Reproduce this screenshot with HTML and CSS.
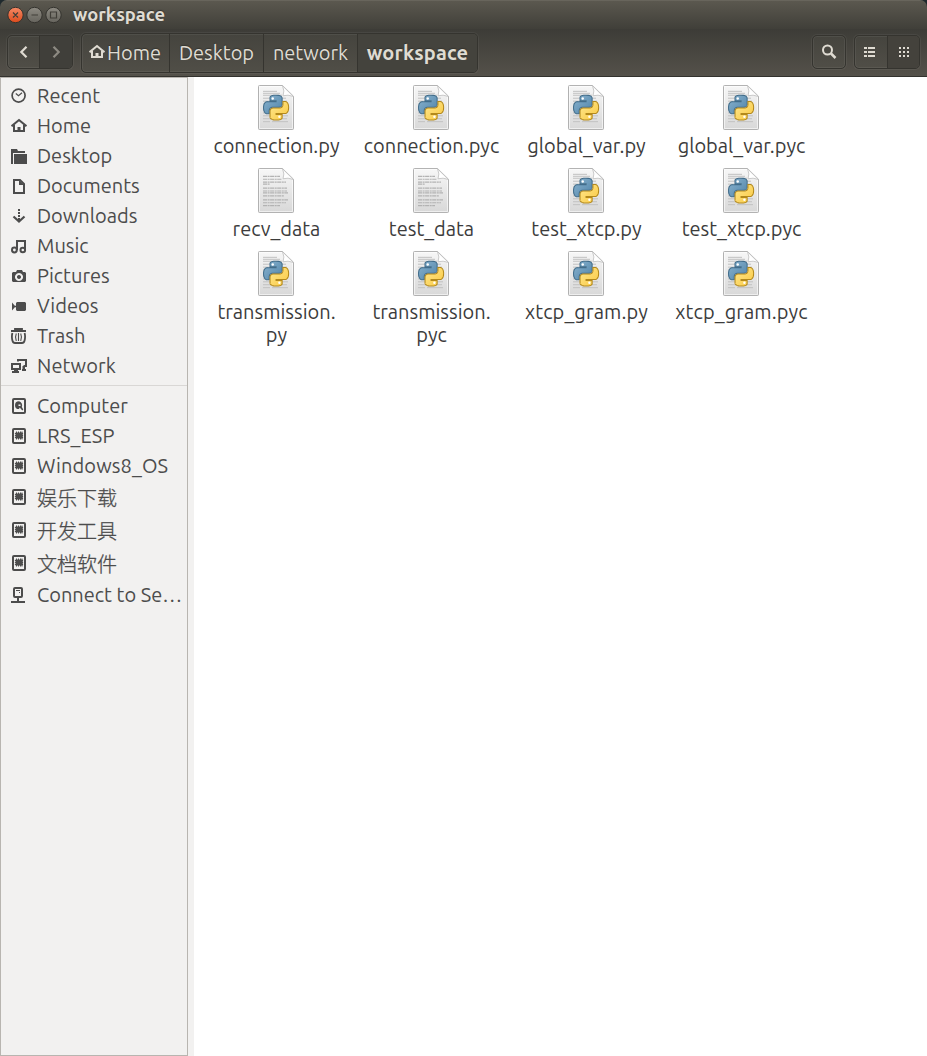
FILE: index.html
```html
<!DOCTYPE html>
<html lang="en">
<head>
<meta charset="utf-8">
<title>workspace</title>
<link rel="stylesheet" href="styles.css">
</head>
<body>
<svg class="defs" width="0" height="0" aria-hidden="true">
  <defs>
    <linearGradient id="paper" x1="0" y1="0" x2="0" y2="1"><stop offset="0" stop-color="#f7f7f7"/><stop offset="1" stop-color="#d8d8d8"/></linearGradient>
    <linearGradient id="blue" x1="0" y1="0" x2="1" y2="1"><stop offset="0" stop-color="#8bb4d0"/><stop offset="1" stop-color="#4f83a8"/></linearGradient>
    <linearGradient id="gold" x1="1" y1="1" x2="0" y2="0"><stop offset="0" stop-color="#ffe890"/><stop offset="1" stop-color="#f9c840"/></linearGradient>
  </defs>
  <symbol id="i-recent" viewBox="0 0 16 16"><circle cx="7.6" cy="7.6" r="6.5" fill="none" stroke="currentColor" stroke-width="1.7"/><path d="M4.8 5.5 7.5 7.7 11 4.8" fill="none" stroke="currentColor" stroke-width="1.2"/></symbol>
  <symbol id="i-home" viewBox="0 0 16 16"><path d="M.5 8.200 8 2l7.500 6.200" fill="none" stroke="currentColor" stroke-width="2"/><path d="M3 7v6h10V7" fill="none" stroke="currentColor" stroke-width="2"/><path d="M6.500 9h3v5h-3z" fill="currentColor"/></symbol>
  <symbol id="i-desktop" viewBox="0 0 16 16"><path d="M0 1h6l1 2h7v2H2v11H0z" fill="currentColor"/><path d="M3 6h13v10H3z" fill="currentColor"/></symbol>
  <symbol id="i-doc" viewBox="0 0 16 16"><path d="M3 2h6l4 4v9H3z" fill="none" stroke="currentColor" stroke-width="2"/><path d="M8 2v5h5z" fill="currentColor"/></symbol>
  <symbol id="i-down" viewBox="0 0 16 16"><path d="M7 1h2v2H7zM7 4h2v2H7zM7 7h2v2H7zM7 10h2v3H7z" fill="currentColor"/><path d="m2.500 8.500 5.500 5 5.500-5" fill="none" stroke="currentColor" stroke-width="2.200"/></symbol>
  <symbol id="i-music" viewBox="0 0 16 16"><path d="M6 12V3h8v9" fill="none" stroke="currentColor" stroke-width="2"/><circle cx="3.400" cy="12" r="2.400" fill="none" stroke="currentColor" stroke-width="2"/><circle cx="11.800" cy="12" r="2.300" fill="none" stroke="currentColor" stroke-width="2"/></symbol>
  <symbol id="i-pic" viewBox="0 0 16 16"><path fill-rule="evenodd" d="M2 4h3l1-2h5l1 2h2l1 1v8l-1 1H2l-1-1V5zM8 5a4 4 0 1 0 .01 0zm0 2a2 2 0 1 1-.01 0z" fill="currentColor"/></symbol>
  <symbol id="i-video" viewBox="0 0 16 16"><path d="m1 4.500 3.500 4-3.500 4zM6 4h8l1 1v7l-1 1H6l-1-1V9.200H4V7.800h1V5z" fill="currentColor"/></symbol>
  <symbol id="i-trash" viewBox="0 0 16 16"><path d="M0 3h15M4 3V1h7v2" fill="none" stroke="currentColor" stroke-width="1.800"/><path d="M1.400 5q-1 3.500 0 7.500 .6 2.500 2.600 2.500h7q2 0 2.600-2.500 1-4 0-7.500" fill="none" stroke="currentColor" stroke-width="1.800"/><path d="M5.300 5.500q-1.600 3.800 0 7.500M7.500 5v8M9.700 5.500q1.600 3.800 0 7.500" fill="none" stroke="currentColor" stroke-width="1.100"/></symbol>
  <symbol id="i-net" viewBox="0 0 16 16"><path d="M7 3.500V2h8v6h-2.500M1 6h8v5H1zM1 14h7M11 12h4" fill="none" stroke="currentColor" stroke-width="2"/><path d="M3 11h4v3H3zM11.500 8H14v4h-2.500z" fill="currentColor"/></symbol>
  <symbol id="i-disk" viewBox="0 0 16 16"><rect x="2" y="1" width="12" height="14" rx="1" fill="none" stroke="currentColor" stroke-width="2"/><path d="M8 3.300a4 3.900 0 1 0 0 7.800l.7-1.600 2.600 3 1-1-1.500-2.600A4 4 0 0 0 8 3.300z" fill="currentColor"/><path d="M7.500 6.500h2v1.500h-2z" fill="#f2f1f0"/></symbol>
  <symbol id="i-chip" viewBox="0 0 16 16"><rect x="2" y="1" width="12" height="14" rx="1" fill="none" stroke="currentColor" stroke-width="2"/><path d="M4.500 4.500h7v6h-7z" fill="currentColor"/><path d="M5.500 3.500v8M7.500 3.500v8M9.500 3.500v8M11 3.500v8" stroke="currentColor" stroke-width="1"/><path d="M3.900 5.500h8.200M3.900 7.500h8.200M3.900 9.500h8.200" stroke="currentColor" stroke-width="1"/></symbol>
  <symbol id="i-server" viewBox="0 0 16 16"><rect x="3" y="1" width="8" height="9" rx="1" fill="none" stroke="currentColor" stroke-width="2"/><path d="M5 3h4v1H5zM8 5h1v1H8zM6 11h2v3H6zM0 14h14v2H0z" fill="currentColor"/></symbol>
  <symbol id="python-half" viewBox="0 0 24 24" overflow="visible"><path stroke-width="1" d="M14.250.18l.9.2.73.26.59.3.45.32.34.34.25.34.16.33.1.3.04.26.02.2-.01.13V8.500l-.05.63-.13.55-.21.46-.26.38-.3.31-.33.25-.35.19-.35.14-.33.1-.3.07-.26.04-.21.02H8.770l-.69.05-.59.14-.5.22-.41.27-.33.32-.27.35-.2.36-.15.37-.1.35-.07.32-.04.27-.02.21v3.060H3.170l-.21-.03-.28-.07-.32-.12-.35-.18-.36-.26-.36-.36-.35-.46-.32-.59-.28-.73-.21-.88-.14-1.050-.05-1.230.06-1.220.16-1.040.24-.87.32-.71.36-.57.4-.44.42-.33.42-.24.4-.16.36-.1.32-.05.24-.01h.16l.06.01h8.160v-.83H6.180l-.01-2.750-.02-.37.05-.34.11-.31.17-.28.25-.26.31-.23.38-.2.44-.18.51-.15.58-.12.64-.1.71-.06.77-.04.84-.02z"/></symbol>
  <symbol id="f-text" viewBox="0 0 36 46" preserveAspectRatio="none"><path d="M.5 1.500q0-1 1-1h23l11 11v33q0 1-1 1h-33q-1 0-1-1z" fill="url(#paper)" stroke="#b0b0b0"/><path d="M1.500 1.500h23l10 10v33h-33z" fill="none" stroke="#fff" stroke-opacity=".6"/><path d="M5 8.500h17M5 11.500h19M5 14.500h23M5 16.500h7M5 20.500h24M5 23.500h24M5 25.500h25M5 28.500h21M5 32.500h25M5 35.500h23M5 38.500h17" stroke="#b2b2b2" stroke-width="1.200" stroke-dasharray="4 .6 2 .5"/><path d="M24.500.8q2.500 5.500.5 10.200 5-1.500 10.300.7z" fill="#fff" stroke="#bdbdbd" stroke-width=".8"/></symbol>
  <symbol id="f-py" viewBox="0 0 36 46" preserveAspectRatio="none"><path d="M.5 1.500q0-1 1-1h23l11 11v33q0 1-1 1h-33q-1 0-1-1z" fill="url(#paper)" stroke="#b0b0b0"/><path d="M1.500 1.500h23l10 10v33h-33z" fill="none" stroke="#fff" stroke-opacity=".6"/><path d="M5 6.500h14M5 8.500h17M5 10.500h19M5 13.500h23M5 16.500h24M5 19.500h24M5 22.500h24M5 25.500h25M5 28.500h24M5 31.500h25M5 34.500h24M5 37.500h7M14 37.500h16" stroke="#c0c0c0" stroke-width="1"/><path d="M24.500.8q2.500 5.500.5 10.200 5-1.500 10.300.7z" fill="#fff" stroke="#bdbdbd" stroke-width=".8"/><g transform="translate(5.600 10.400) scale(1.040 1.060)"><use href="#python-half" width="24" height="24" fill="url(#blue)" stroke="#426d8b"/><g transform="rotate(180 12 12)"><use href="#python-half" width="24" height="24" fill="url(#gold)" stroke="#b3891c"/></g><circle cx="8.800" cy="3.200" r="1.150" fill="#fff"/><circle cx="15.200" cy="20.800" r="1.150" fill="#fff"/></g></symbol>
</svg>

<header class="chrome">
  <div class="titlebar">
    <svg class="winbuttons" width="56" height="18" viewBox="0 0 56 18">
      <defs><linearGradient id="close" x1="0" y1="0" x2="0" y2="1"><stop offset="0" stop-color="#f58a66"/><stop offset="1" stop-color="#dd4b1c"/></linearGradient><linearGradient id="gray" x1="0" y1="0" x2="0" y2="1"><stop offset="0" stop-color="#8d8a82"/><stop offset="1" stop-color="#66645d"/></linearGradient></defs>
      <circle cx="8.500" cy="9" r="7.700" fill="url(#close)" stroke="#34332e"/><circle cx="27.500" cy="9" r="7.700" fill="url(#gray)" stroke="#34332e"/><circle cx="46.500" cy="9" r="7.700" fill="url(#gray)" stroke="#34332e"/>
      <path d="m6 6.500 5 5m0-5-5 5M24.500 9h6.500M43.500 6h6v6h-6z" fill="none" stroke="#403e38" stroke-width="1.200"/>
    </svg>
    <span class="title">workspace</span>
  </div>
  <nav class="toolbar">
    <div class="group nav">
      <span class="btn"><svg width="12" height="14" viewBox="0 0 12 14"><path d="M8.500 1.700 3.300 7l5.200 5.300" fill="none" stroke="#dfdbd2" stroke-width="2.200"/></svg></span>
      <span class="btn off"><svg width="12" height="14" viewBox="0 0 12 14"><path d="M3.500 1.700 8.700 7l-5.200 5.300" fill="none" stroke="#8d8a82" stroke-width="2.200"/></svg></span>
    </div>
    <div class="group path">
      <span class="crumb c-home"><svg width="16" height="16"><use href="#i-home"/></svg><span>Home</span></span>
      <span class="crumb c-desktop">Desktop</span>
      <span class="crumb c-network">network</span>
      <span class="crumb c-current">workspace</span>
    </div>
    <div class="group search"><span class="btn"><svg width="16" height="16" viewBox="0 0 16 16"><circle cx="6.500" cy="6" r="4.500" fill="none" stroke="#dfdbd2" stroke-width="2"/><path d="m10 9.500 4.500 4.500" stroke="#dfdbd2" stroke-width="2.500"/></svg></span></div>
    <div class="group views">
      <span class="btn b-list"><svg width="11" height="10" viewBox="0 0 11 10"><path d="M0 0h3v2H0zM4 0h7v2H4zM0 4h3v2H0zM4 4h7v2H4zM0 8h3v2H0zM4 8h7v2H4z" fill="#dfdbd2"/></svg></span>
      <span class="btn on"><svg width="10" height="10" viewBox="0 0 10 10"><path d="M0 0h2v2H0zM4 0h2v2H4zM8 0h2v2H8zM0 4h2v2H0zM4 4h2v2H4zM8 4h2v2H8zM0 8h2v2H0zM4 8h2v2H4zM8 8h2v2H8z" fill="#dfdbd2"/></svg></span>
    </div>
  </nav>
</header>

<main class="body">
  <aside class="sidebar">
    <ul class="places">
      <li><svg class="ico"><use href="#i-recent"/></svg><span>Recent</span></li>
      <li><svg class="ico"><use href="#i-home"/></svg><span>Home</span></li>
      <li><svg class="ico"><use href="#i-desktop"/></svg><span>Desktop</span></li>
      <li><svg class="ico"><use href="#i-doc"/></svg><span>Documents</span></li>
      <li><svg class="ico"><use href="#i-down"/></svg><span>Downloads</span></li>
      <li><svg class="ico"><use href="#i-music"/></svg><span>Music</span></li>
      <li><svg class="ico"><use href="#i-pic"/></svg><span>Pictures</span></li>
      <li><svg class="ico"><use href="#i-video"/></svg><span>Videos</span></li>
      <li><svg class="ico"><use href="#i-trash"/></svg><span>Trash</span></li>
      <li><svg class="ico"><use href="#i-net"/></svg><span class="wide">Network</span></li>
    </ul>
    <ul class="places devices">
      <li><svg class="ico"><use href="#i-disk"/></svg><span>Computer</span></li>
      <li><svg class="ico"><use href="#i-chip"/></svg><span class="wide">LRS_ESP</span></li>
      <li><svg class="ico"><use href="#i-chip"/></svg><span class="wide">Windows8_OS</span></li>
      <li class="cjk"><svg class="ico"><use href="#i-chip"/></svg><span>娱乐下载</span></li>
      <li class="cjk"><svg class="ico"><use href="#i-chip"/></svg><span>开发工具</span></li>
      <li class="cjk"><svg class="ico"><use href="#i-chip"/></svg><span>文档软件</span></li>
      <li><svg class="ico"><use href="#i-server"/></svg><span>Connect to Se…</span></li>
    </ul>
  </aside>
  <section class="files">
    <div class="file"><svg><use href="#f-py"/></svg><span>connection.py</span></div>
    <div class="file"><svg><use href="#f-py"/></svg><span>connection.pyc</span></div>
    <div class="file"><svg><use href="#f-py"/></svg><span>global_var.py</span></div>
    <div class="file"><svg><use href="#f-py"/></svg><span>global_var.pyc</span></div>
    <div class="file"><svg><use href="#f-text"/></svg><span>recv_data</span></div>
    <div class="file"><svg><use href="#f-text"/></svg><span>test_data</span></div>
    <div class="file"><svg><use href="#f-py"/></svg><span>test_xtcp.py</span></div>
    <div class="file"><svg><use href="#f-py"/></svg><span>test_xtcp.pyc</span></div>
    <div class="file"><svg><use href="#f-py"/></svg><span>transmission.<br>py</span></div>
    <div class="file"><svg><use href="#f-py"/></svg><span>transmission.<br>pyc</span></div>
    <div class="file"><svg><use href="#f-py"/></svg><span class="wide">xtcp_gram.py</span></div>
    <div class="file"><svg><use href="#f-py"/></svg><span class="wide">xtcp_gram.pyc</span></div>
  </section>
</main>
</body>
</html>
```

FILE: styles.css
```css
* { box-sizing: border-box; }
body {
  margin: 0;
  height: 1056px;
  display: flex;
  flex-direction: column;
  overflow: hidden;
  background: #1f292d;
  color: #4c4c4c;
  font: 20px/23px Ubuntu, "Noto Sans", "Noto Sans CJK SC", sans-serif;
}
svg { display: block; flex: none; }
.defs { position: absolute; }
.wide { letter-spacing: .12px; }

.chrome { flex: none; height: 77px; border-bottom: 1px solid #33322e; border-radius: 7px 7px 0 0; overflow: hidden; color: #dfdbd2; }
.titlebar {
  height: 29px;
  display: flex;
  align-items: center;
  padding: 0 0 0 7px;
  border-top: 1px solid #68655c;
  background: linear-gradient(#5b584f, #403f39);
}
.winbuttons { margin-right: 10px; }
.title { font-size: 18.400px; line-height: 22px; padding-bottom: 2px; font-weight: 700; text-shadow: 0 -1px 1px #33322e; }
.toolbar {
  height: 47px;
  display: flex;
  align-items: center;
  padding: 0 7px 1px;
  background: linear-gradient(#3d3c37, #54514a);
}
.group {
  display: flex;
  height: 34px;
  border: 1px solid #35342f;
  border-radius: 5px;
  overflow: hidden;
  background: linear-gradient(#45443e, #504e47);
  box-shadow: 0 0 0 1px rgba(255, 255, 255, .05), inset 0 0 0 1px rgba(255, 255, 255, .06);
}
.btn { flex: 1; display: flex; align-items: center; justify-content: center; }
.btn + .btn { border-left: 1px solid #35342f; }
.btn.off { background: #403f3a; }
.btn.on { background: #44423c; }
.nav { width: 66px; margin-right: 8px; }
.nav .btn:first-child { flex: 0 0 31px; }
.views .btn:first-child { flex: 0 0 32px; padding-right: 3px; }
.path { height: 40px; width: 397px; margin-top: 2px; }
.crumb { display: flex; align-items: center; justify-content: center; padding-bottom: 2px; border-left: 1px solid #35342f; text-shadow: 0 -1px 1px #35342f; }
.c-home { width: 87px; border-left: 0; justify-content: flex-start; padding-left: 7px; gap: 2px; }
.c-desktop { width: 94px; }
.c-network { width: 94px; }
.c-current { flex: 1; font-weight: 700; letter-spacing: .15px; background: #44433d; }
.search { width: 34px; margin-left: auto; margin-right: 8px; }
.views { width: 66px; }

.body { flex: 1; display: flex; background: #fff; }
.sidebar { width: 188px; border: 1px solid #b8b5b0; background: #f2f1f0; padding-top: 3px; }
.places { list-style: none; margin: 0; padding: 0; }
.places li { height: 30px; display: flex; align-items: center; padding-left: 10px; gap: 10px; white-space: nowrap; }
.ico { width: 16px; height: 16px; }
.places li span { padding-bottom: 1px; }
.devices { border-top: 1px solid #d9d7d5; margin-top: 4px; padding-top: 5px; }
.places .cjk { height: 33px; font-weight: 300; -webkit-text-stroke: .3px #4c4c4c; }
.places .cjk span { padding: 2px 0 0; }
.cjk .ico { margin-bottom: 1px; }

.files {
  flex: 1;
  border-left: 6px solid #f2f1f0;
  padding: 8px 0 0 5px;
  display: grid;
  grid-template-columns: repeat(4, 155px);
  grid-auto-rows: 83px;
  align-content: start;
  color: #3c3c3c;
}
.file { display: flex; flex-direction: column; align-items: center; text-align: center; gap: 4px; }
.file svg { width: 36px; height: 45px; margin-right: 1px; }
```
